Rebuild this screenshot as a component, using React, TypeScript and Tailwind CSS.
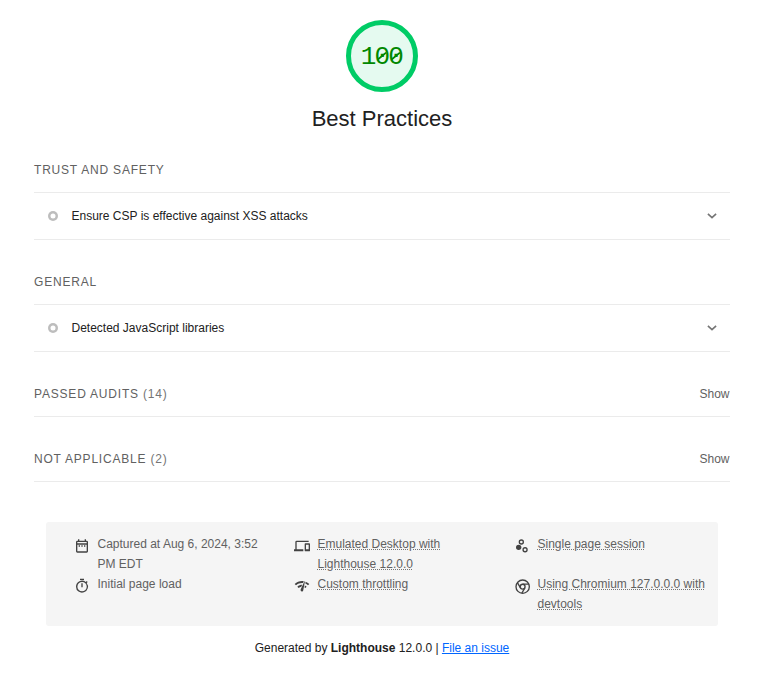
import type { ReactNode } from "react";

function Icon({ children }: { children: ReactNode }) {
  return (
    <svg viewBox="0 0 24 24" className="mt-1 size-4 shrink-0 overflow-visible" fill="#424242">
      {children}
    </svg>
  );
}

function CalendarIcon() {
  return (
    <Icon>
      <path d="M7 11h2v2H7v-2zm14-5v14a2 2 0 0 1-2 2H5a2 2 0 0 1-2-2V6c0-1.1.9-2 2-2h1V2h2v2h8V2h2v2h1a2 2 0 0 1 2 2zM5 8h14V6H5v2zm14 12V10H5v10h14zm-4-7h2v-2h-2v2zm-4 0h2v-2h-2v2z" />
    </Icon>
  );
}

function DevicesIcon() {
  return (
    <Icon>
      <path d="M4 6h18V4H4a2 2 0 0 0-2 2v11H0v3h14v-3H4V6zm19 2h-6a1 1 0 0 0-1 1v10c0 .6.5 1 1 1h6c.6 0 1-.5 1-1V9c0-.6-.5-1-1-1zm-1 9h-4v-7h4v7z" />
    </Icon>
  );
}

function StopwatchIcon() {
  return (
    <Icon>
      <path d="M15 1H9v2h6V1zm-4 13h2V8h-2v6zm8.1-6.6L20.5 6l-1.4-1.4L17.7 6A9 9 0 0 0 3 13a9 9 0 1 0 16-5.6zm-7 12.6a7 7 0 1 1 0-14 7 7 0 0 1 0 14z" />
    </Icon>
  );
}

function NetworkIcon() {
  return (
    <Icon>
      <path d="M15.9 5c-.2 0-.3 0-.4.2v.2L10.1 17a2 2 0 0 0-.2 1 2 2 0 0 0 4 .4l2.4-12.9c0-.3-.2-.5-.5-.5zM1 9l2 2c2.9-2.9 6.8-4 10.5-3.6l1.2-2.7C10 3.8 4.7 5.3 1 9zm20 2 2-2a15.4 15.4 0 0 0-5.6-3.5l-.4 2.8c1.5.6 2.8 1.4 4 2.7zm-4 4 2-2a9.9 9.9 0 0 0-2.7-1.9l-.5 3 1.2.9zM5 13l2 2a7.1 7.1 0 0 1 4-2l1.3-2.9C9.7 10.1 7 11 5 13z" />
    </Icon>
  );
}

function SessionIcon() {
  return (
    <Icon>
      <circle cx="7" cy="14" r="4" />
      <circle cx="11" cy="6" r="3" fill="none" stroke="#424242" strokeWidth="2" />
      <circle cx="16.6" cy="17.6" r="3" fill="none" stroke="#424242" strokeWidth="2" />
    </Icon>
  );
}

function ChromeIcon() {
  return (
    <Icon>
      <g fill="none" stroke="#424242" strokeWidth="2">
        <circle cx="13" cy="13" r="10" />
        <circle cx="13" cy="13" r="3.6" />
        <path d="M13 9.2h9.2M16.3 14.9l-4.6 8M9.7 14.9 5.1 6.9" />
      </g>
    </Icon>
  );
}

function Audit({ group, title }: { group: string; title: string }) {
  return (
    <section className="mb-[30px]">
      <h2 className="h-[34px] text-xs leading-6 tracking-[0.8px] text-[#616161]">{group}</h2>
      <div className="flex h-12 items-center border-y border-[#ebebeb] pl-3.5 pr-3">
        <span className="size-2.5 rounded-full shadow-[inset_0_0_0_2.5px_#bdbdbd]" />
        <span className="ml-[13.5px] flex-1 text-xs text-[#212121]">{title}</span>
        <svg viewBox="0 0 12 12" className="size-3" fill="none" stroke="#757575" strokeWidth="1.6">
          <path d="m1.9 3.8 4.1 3.8 4.1-3.8" />
        </svg>
      </div>
    </section>
  );
}

function Clump({ title, count }: { title: string; count: number }) {
  return (
    <section className="mb-[30px] flex h-[35px] justify-between border-b border-[#ebebeb] text-[#616161]">
      <h2 className="text-xs leading-6 tracking-[0.8px]">
        {title} <span className="text-[#757575]">({count})</span>
      </h2>
      <span className="pr-[0.5px] text-xs leading-6">Show</span>
    </section>
  );
}

function Meta({ icon, children, plain }: { icon: ReactNode; children: ReactNode; plain?: boolean }) {
  return (
    <li className="flex gap-[7.5px]">
      {icon}
      <span className="leading-5">
        {plain ? (
          children
        ) : (
          <span className="underline decoration-[#757575] decoration-dotted decoration-1 underline-offset-1">{children}</span>
        )}
      </span>
    </li>
  );
}

export default function App() {
  return (
    <main className="h-[685px] w-[766px] bg-white px-[34px] pt-5 font-['Liberation_Sans',Arial,sans-serif] text-xs text-[#212121]">
      <header className="flex w-[696px] flex-col items-center">
        <div className="relative flex size-[72px] items-center justify-center rounded-full border-[5px] border-[#00cc66] bg-[#e5faf0] font-['Liberation_Mono',monospace] text-[26px] leading-none tracking-[-1.8px] text-[#008800]">
          <span className="relative -left-[0.6px] top-px">100</span>
          <svg viewBox="0 0 62 62" className="absolute inset-0 size-[62px]" fill="none" stroke="#008800" strokeWidth="1.8">
            <path d="m26.5 34.8 8.6-7.2M40.3 34.8l8.6-7.2" />
          </svg>
        </div>
        <h1 className="mt-[13px] text-[22px] leading-7">Best Practices</h1>
      </header>
      <div className="mt-[25px] w-[696px]">
        <Audit group="TRUST AND SAFETY" title="Ensure CSP is effective against XSS attacks" />
        <Audit group="GENERAL" title="Detected JavaScript libraries" />
        <Clump title="PASSED AUDITS" count={14} />
        <Clump title="NOT APPLICABLE" count={2} />
      </div>
      <footer className="w-[696px]">
        <ul className="mx-3 mt-10 grid h-[104px] grid-cols-[196px_196px_196px] content-start gap-x-6 rounded-[3px] bg-[#f5f5f5] py-3 pl-7 text-[#616161]">
          <Meta plain icon={<CalendarIcon />}>Captured at Aug 6, 2024, 3:52 PM EDT</Meta>
          <Meta icon={<DevicesIcon />}>Emulated Desktop with Lighthouse 12.0.0</Meta>
          <Meta icon={<SessionIcon />}>Single page session</Meta>
          <Meta plain icon={<StopwatchIcon />}>Initial page load</Meta>
          <Meta icon={<NetworkIcon />}>Custom throttling</Meta>
          <Meta icon={<ChromeIcon />}>Using Chromium 127.0.0.0 with devtools</Meta>
        </ul>
        <p className="mt-3 text-center leading-5">
          Generated by <b>Lighthouse</b> 12.0.0 | <a className="text-[#0066ff] underline">File an issue</a>
        </p>
      </footer>
    </main>
  );
}
